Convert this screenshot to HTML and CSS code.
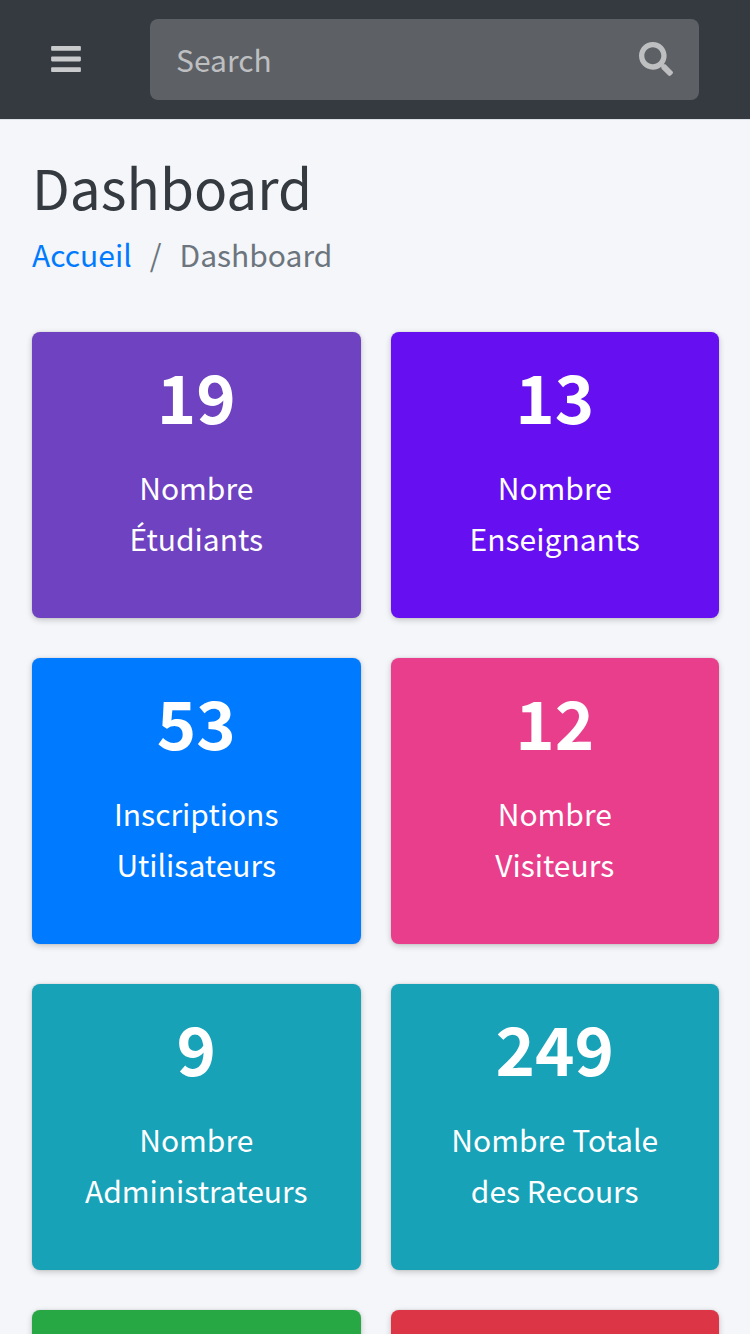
FILE: index.html
```html
<!DOCTYPE html>
<html lang="fr">
<head>
<meta charset="utf-8">
<meta name="viewport" content="width=device-width, initial-scale=1">
<title>Dashboard</title>
<link rel="stylesheet" href="styles.css">
</head>
<body>
<header class="navbar">
  <button class="menu-button" type="button" aria-label="Menu">
    <svg class="menu-icon" viewBox="0 0 448 512" aria-hidden="true"><path d="M16 132h416c8.837 0 16-7.163 16-16V76c0-8.837-7.163-16-16-16H16C7.163 60 0 67.163 0 76v40c0 8.837 7.163 16 16 16zm0 160h416c8.837 0 16-7.163 16-16v-40c0-8.837-7.163-16-16-16H16c-8.837 0-16 7.163-16 16v40c0 8.837 7.163 16 16 16zm0 160h416c8.837 0 16-7.163 16-16v-40c0-8.837-7.163-16-16-16H16c-8.837 0-16 7.163-16 16v40c0 8.837 7.163 16 16 16z"/></svg>
  </button>
  <form class="search" role="search">
    <input class="search-input" type="search" placeholder="Search" aria-label="Search">
    <button class="search-button" type="submit" aria-label="Search">
      <svg class="search-icon" viewBox="0 0 512 512" aria-hidden="true"><path d="M505 442.700L405.300 343c-4.500-4.500-10.600-7-17-7H372c27.600-35.300 44-79.700 44-128C416 93.100 322.900 0 208 0S0 93.100 0 208s93.100 208 208 208c48.300 0 92.700-16.400 128-44v16.300c0 6.400 2.500 12.500 7 17l99.700 99.700c9.400 9.400 24.600 9.400 33.900 0l28.300-28.300c9.400-9.400 9.400-24.600.1-34zM208 336c-70.700 0-128-57.200-128-128 0-70.700 57.200-128 128-128 70.700 0 128 57.200 128 128 0 70.700-57.200 128-128 128z"/></svg>
    </button>
  </form>
</header>
<main class="content">
  <h1 class="title">Dashboard</h1>
  <nav aria-label="Breadcrumb">
    <ol class="breadcrumb">
      <li><a class="breadcrumb-link" href="#">Accueil</a></li>
      <li class="separator" aria-hidden="true">/</li>
      <li>Dashboard</li>
    </ol>
  </nav>
  <section class="cards">
    <article class="card purple"><h2 class="count">19</h2><p class="label">Nombre Étudiants</p></article>
    <article class="card indigo"><h2 class="count">13</h2><p class="label">Nombre Enseignants</p></article>
    <article class="card blue"><h2 class="count">53</h2><p class="label">Inscriptions Utilisateurs</p></article>
    <article class="card pink"><h2 class="count">12</h2><p class="label">Nombre Visiteurs</p></article>
    <article class="card teal"><h2 class="count">9</h2><p class="label">Nombre Administrateurs</p></article>
    <article class="card teal"><h2 class="count">249</h2><p class="label">Nombre Totale des Recours</p></article>
    <article class="card green"></article>
    <article class="card red"></article>
  </section>
</main>
</body>
</html>
```
FILE: styles.css
```css
* { box-sizing: border-box; }

html { overflow-x: hidden; scrollbar-width: none; }

body {
  margin: 0;
  background: #f4f6f9;
  color: #343a40;
  font-family: "Source Sans Pro", "Noto Sans CJK SC", sans-serif;
  font-size: 30px;
  line-height: 51px;
}

.navbar {
  display: flex;
  align-items: center;
  gap: 52px;
  padding: 19px 51px 19px 34px;
  background: #343a40;
  background-clip: padding-box;
  border-bottom: 1px solid #dee2e6;
}

.menu-button,
.search-button {
  display: flex;
  align-items: flex-start;
  height: 35px;
  padding: 0 17px;
  border: 0;
  background: none;
  cursor: pointer;
}

.menu-icon { width: 30px; height: 34px; fill: #c9cacc; }

.search {
  display: flex;
  flex: 1;
  align-items: center;
  height: 81px;
  padding: 0 9px;
  border-radius: 8px;
  background: #5d6165;
}

.search-input {
  flex: 1;
  min-width: 0;
  height: 51px;
  padding: 0 17px;
  border: 0;
  outline: 0;
  background: none;
  color: #fff;
  font: inherit;
}

.search-input::placeholder { color: #bebfc1; opacity: 1; }

.search-icon { width: 34px; height: 34px; fill: #bebfc1; }

.content { padding: 30px 31px 0 32px; }

.title {
  margin: 0;
  font-size: 55px;
  font-weight: 400;
  line-height: 72px;
}

.breadcrumb {
  display: flex;
  gap: 18px;
  margin: 7px 0 0;
  padding: 0;
  list-style: none;
  color: #6c757d;
}

.breadcrumb-link { color: #007bff; text-decoration: none; }

.cards {
  display: grid;
  grid-template-columns: repeat(2, minmax(0, 1fr));
  gap: 40px 30px;
  margin-top: 52px;
}

.card {
  min-height: 286px;
  padding: 19px 48px;
  border-radius: 8px;
  box-shadow: 0 2px 6px rgba(0, 0, 0, 0.2), 0 0 2px rgba(0, 0, 0, 0.13);
  color: #fff;
  text-align: center;
}

.count {
  margin: 0 0 23px;
  font-size: 67px;
  font-weight: 700;
  line-height: 88px;
}

.label { margin: 0; }

.purple { background: #6f42c1; }
.indigo { background: #6610f2; }
.blue { background: #007bff; }
.pink { background: #e83e8c; }
.teal { background: #17a2b8; }
.green { background: #28a745; }
.red { background: #dc3545; }
```
